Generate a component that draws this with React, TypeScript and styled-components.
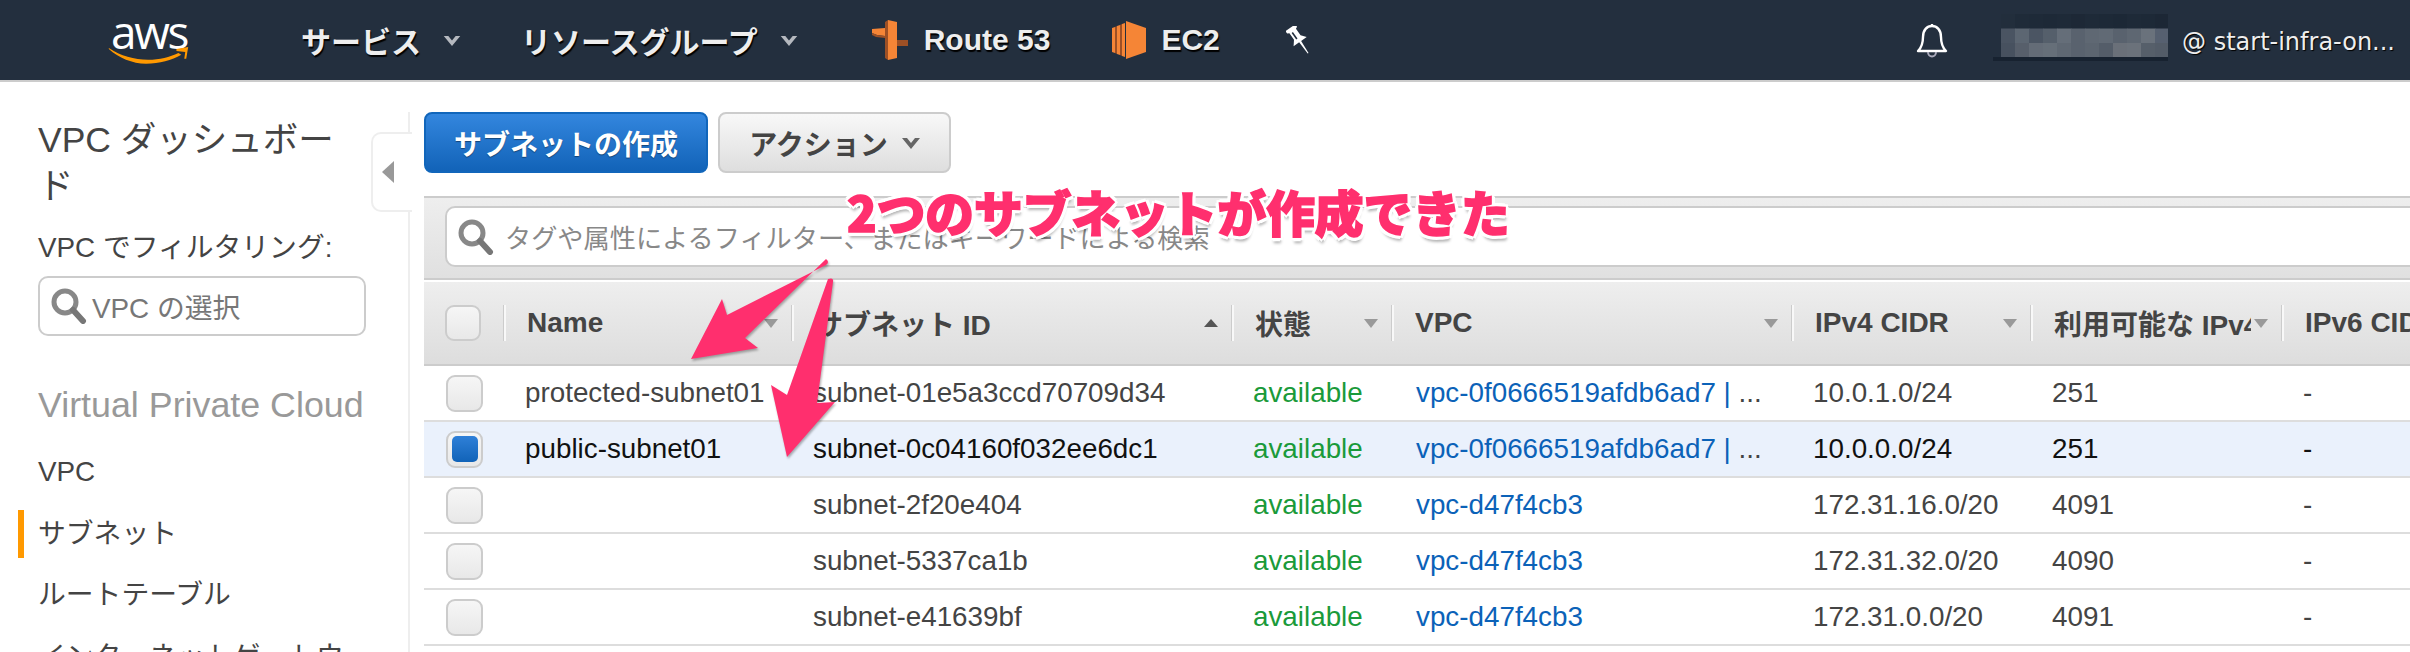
import React from 'react';
import styled, { createGlobalStyle } from 'styled-components';

const GlobalStyle = createGlobalStyle`
  html, body {
    margin: 0;
    padding: 0;
    background: #fff;
    overflow: hidden;
  }
`;

const sans = `"Liberation Sans", "Noto Sans CJK JP", sans-serif`;
const columns = '80px 288px 440px 160px 400px 239px 251px 1fr';

const Page = styled.div`
  position: relative;
  width: 2410px;
  height: 652px;
  overflow: hidden;
  font-family: ${sans};
  font-size: 27.8px;
  color: #444;
`;

const TopBar = styled.header`
  display: flex;
  align-items: center;
  height: 80px;
  padding-left: 108px;
  background: #232f3e;
  border-bottom: 2px solid #ccc;
  color: #eee;
  font-weight: bold;
  font-size: 30px;
  text-shadow: 1px 2px 1px #000;
`;

const Logo = styled.div`
  display: flex;
  flex-direction: column;
  align-items: center;
  width: 82px;
  height: 48px;
  margin-right: 111px;
  text-shadow: none;
`;

const LogoText = styled.span`
  font-family: "Open Sans", sans-serif;
  font-size: 46px;
  font-weight: 400;
  line-height: 30px;
  letter-spacing: -2.4px;
  color: #fff;
  height: 32px;
`;

const MenuItem = styled.div<{ $gap: number }>`
  display: flex;
  align-items: center;
  margin-right: ${({ $gap }) => $gap}px;
  white-space: nowrap;
`;

const MenuCaret = styled.svg`
  width: 18px;
  height: 11px;
  margin-left: 22px;
  fill: #b5b9bf;
`;

const ServiceIcon = styled.svg<{ $gap: number }>`
  margin-right: ${({ $gap }) => $gap}px;
`;

const PinIcon = styled.svg`
  flex: none;
`;

const TopRight = styled.div`
  display: flex;
  align-items: center;
  height: 80px;
  margin-left: auto;
  padding-right: 15px;
`;

const Bell = styled.svg`
  margin-right: 45px;
`;

const Mosaic = styled.svg`
  margin-right: 14px;
`;

const Account = styled.span`
  font-family: "DejaVu Sans", sans-serif;
  font-size: 24px;
  font-weight: normal;
  text-shadow: 1px 1px 1px #000;
  white-space: nowrap;
  padding-top: 4px;
`;

const Body = styled.div`
  display: flex;
  height: 570px;
`;

const Sidebar = styled.aside`
  position: relative;
  flex: 0 0 410px;
  box-sizing: border-box;
  margin-top: 30px;
  padding: 5px 42px 0 38px;
  border-right: 2px solid #eee;
`;

const SideTitle = styled.div`
  max-width: 310px;
  font-size: 35.5px;
  line-height: 46px;
`;

const FilterLabel = styled.div`
  margin-top: 21px;
  line-height: 36px;
  white-space: nowrap;
`;

const Select = styled.div`
  display: flex;
  align-items: center;
  gap: 5px;
  box-sizing: border-box;
  height: 60px;
  margin-top: 10px;
  padding-left: 11px;
  border: 2px solid #ccc;
  border-radius: 10px;
  color: #777;
`;

const SectionTitle = styled.div`
  margin-top: 47px;
  font-size: 35.8px;
  line-height: 44px;
  color: #999;
  white-space: nowrap;
`;

const NavList = styled.nav`
  display: flex;
  flex-direction: column;
  gap: 13.5px;
  margin-top: 21px;
`;

const NavItem = styled.div<{ $active?: boolean }>`
  min-height: 48px;
  line-height: 48px;
  margin-left: -20px;
  padding-left: 14px;
  border-left: 6px solid ${({ $active }) => ($active ? '#f90' : 'transparent')};
`;

const CollapseTab = styled.div`
  position: absolute;
  top: 20px;
  left: 371px;
  display: flex;
  align-items: center;
  justify-content: center;
  box-sizing: border-box;
  width: 41px;
  height: 80px;
  padding-right: 10px;
  background: #fff;
  border: 2px solid #eee;
  border-right: 0;
  border-radius: 10px 0 0 10px;
`;

const TabArrow = styled.div`
  width: 0;
  height: 0;
  border-top: 11px solid transparent;
  border-bottom: 11px solid transparent;
  border-right: 12px solid #999;
`;

const Main = styled.main`
  flex: 1;
  min-width: 0;
  padding-top: 30px;
  margin-left: -2px;
  padding-left: 16px;
  overflow: hidden;
`;

const Toolbar = styled.div`
  display: flex;
  gap: 10px;
`;

const PrimaryButton = styled.button`
  box-sizing: border-box;
  width: 284px;
  height: 61px;
  border: 2px solid #1166bb;
  border-radius: 8px;
  background: linear-gradient(#3386de, #1263b8);
  color: #fff;
  font: bold 28px ${sans};
  text-shadow: 0 1px 1px rgba(0, 0, 0, 0.4);
`;

const ActionButton = styled.button`
  display: flex;
  align-items: center;
  justify-content: center;
  gap: 14px;
  box-sizing: border-box;
  width: 233px;
  height: 61px;
  border: 2px solid #ccc;
  border-radius: 8px;
  background: linear-gradient(#f8f8f8, #dedede);
  color: #444;
  font: bold 28px ${sans};
`;

const ActionCaret = styled.svg`
  width: 18px;
  height: 12px;
  fill: #666;
`;

const FilterBand = styled.div`
  box-sizing: border-box;
  height: 84px;
  margin-top: 23px;
  padding: 8px 0 0 21px;
  background: linear-gradient(#eee, #e0e0e0);
  border-top: 2px solid #ccc;
  border-bottom: 2px solid #ccc;
`;

const FilterInput = styled.div`
  display: flex;
  align-items: center;
  gap: 11px;
  box-sizing: border-box;
  height: 61px;
  margin-right: -12px;
  padding-left: 11px;
  background: #fff;
  border: 2px solid #ccc;
  border-radius: 10px 0 0 10px;
  color: #888;
  font-size: 26.2px;
  white-space: nowrap;
`;

const HeaderRow = styled.div`
  display: grid;
  grid-template-columns: ${columns};
  align-items: center;
  box-sizing: border-box;
  height: 84px;
  margin-top: 2px;
  background: linear-gradient(#eee, #ddd);
  border-bottom: 2px solid #ccc;
`;

const HeadCheckCell = styled.div`
  padding-left: 21px;
`;

const HeadCell = styled.div`
  display: flex;
  align-items: center;
  gap: 3px;
  box-sizing: border-box;
  height: 36px;
  min-width: 0;
  padding: 0 14px 0 21px;
  border-left: 2px solid #f8f8f8;
  box-shadow: -1px 0 0 #ccc;

  &:last-child {
    padding-right: 0;
  }
`;

const HeadLabel = styled.span`
  flex: 1;
  min-width: 0;
  overflow: hidden;
  white-space: nowrap;
  font-weight: bold;
  font-size: 28px;
  color: #444;
`;

const SortCaret = styled.div<{ $up?: boolean }>`
  flex: none;
  width: 0;
  height: 0;
  border-left: 7.5px solid transparent;
  border-right: 7.5px solid transparent;
  ${({ $up }) => ($up ? 'border-bottom: 8px solid #555;' : 'border-top: 9px solid #999;')}
`;

const Row = styled.div<{ $selected?: boolean }>`
  display: grid;
  grid-template-columns: ${columns};
  align-items: center;
  box-sizing: border-box;
  height: 56px;
  background: ${({ $selected }) => ($selected ? '#eaf1fc' : '#fff')};
  border-bottom: 2px solid #ddd;
  color: ${({ $selected }) => ($selected ? '#111' : '#444')};
`;

const CheckCell = styled.div`
  padding-left: 22px;
`;

const Cell = styled.div`
  min-width: 0;
  padding-left: 21px;
  white-space: nowrap;
`;

const LinkCell = styled(Cell)`
  padding-left: 24px;
  color: #444;
`;

const Available = styled.span`
  color: #1a9a3a;
`;

const VpcLink = styled.span`
  color: #0b62b8;
`;

const Checkbox = styled.div<{ $size: number }>`
  display: flex;
  align-items: center;
  justify-content: center;
  box-sizing: border-box;
  width: ${({ $size }) => $size}px;
  height: ${({ $size }) => $size}px;
  border: 2px solid #ccc;
  border-radius: 9px;
  background: linear-gradient(#f6f6f6, #e8e8e8);
`;

const CheckMark = styled.div`
  width: 26px;
  height: 26px;
  border-radius: 5px;
  background: linear-gradient(#2f80d8, #1163b8);
`;

const Annotation = styled.div`
  position: absolute;
  top: 179px;
  left: 847px;
  font-family: "Noto Sans CJK JP", sans-serif;
  font-size: 48.7px;
  font-weight: 900;
  line-height: 64px;
  color: #ff2f6e;
  white-space: nowrap;
  -webkit-text-stroke: 1.6px #ff2f6e;
  text-shadow:
    4px 0 0 #fff, -4px 0 0 #fff, 0 4px 0 #fff, 0 -4px 0 #fff,
    3px 3px 0 #fff, -3px 3px 0 #fff, 3px -3px 0 #fff, -3px -3px 0 #fff,
    1px 6px 3px rgba(0, 0, 0, 0.3);
`;

const ArrowLayer = styled.svg`
  position: absolute;
  top: 0;
  left: 0;
  pointer-events: none;
  filter: drop-shadow(1px 2px 1px rgba(0, 0, 0, 0.3));
`;

const DownCaret = ({ icon: Icon }: { icon: typeof MenuCaret | typeof ActionCaret }) => (
  <Icon viewBox="0 0 18 12">
    <path d="M0 1l5 0 4 5 4-5 5 0-9 11z" />
  </Icon>
);

const Magnifier = () => (
  <svg width="36" height="36" viewBox="0 0 36 36">
    <circle cx="14" cy="14" r="11" fill="#fff" stroke="#888" strokeWidth="5" />
    <path d="M22 22l10 11" stroke="#777" strokeWidth="6" strokeLinecap="round" />
  </svg>
);

const Route53Icon = () => (
  <ServiceIcon $gap={16} width="36" height="40" viewBox="0 0 36 40">
    <path d="M0 9l13-1v8l-8-1-5-2z" fill="#f58536" />
    <path d="M0 13l5 2 8 1v2l-9-1-4-2z" fill="#9d5025" />
    <path d="M13 2l3-2v40l-3-2z" fill="#9d5025" />
    <path d="M16 0l9 2v36l-9 2z" fill="#f58536" />
    <path d="M25 20h11v6H25z" fill="#9d5025" />
  </ServiceIcon>
);

const Ec2Icon = () => (
  <ServiceIcon $gap={15} width="34" height="38" viewBox="0 0 34 38">
    <path d="M14 0l20 7v24l-20 7z" fill="#f58536" />
    <path d="M0 7l3-1v26l-3-1zM5 5l3-1v30l-3-1zM10 3l3-1v34l-3-1z" fill="#f58536" />
    <path d="M3 6l2-1v28l-2-1zM8 4l2-1v32l-2-1z" fill="#9d5025" />
  </ServiceIcon>
);

const Pin = () => (
  <PinIcon width="26" height="28" viewBox="0 0 26 28">
    <g transform="rotate(-35 13 14)">
      <path d="M7 -1h12v3l-2 1v8l4 5H14.2L13.4 30h-1L11.8 16H5l4-5V3L7 2z" fill="#fff" />
      <path d="M11 4h1.6v8H11z" fill="#232f3e" />
    </g>
  </PinIcon>
);

const BellIcon = () => (
  <Bell width="32" height="36" viewBox="0 0 32 36" fill="none" stroke="#fff" strokeWidth="2.4">
    <path d="M16 2v2M2 29c4-4 5-8 5-14 0-7 4-11 9-11s9 4 9 11c0 6 1 10 5 14z" strokeLinejoin="round" />
    <path d="M12 30c0 6 8 6 8 0" stroke="#aab" strokeWidth="2" />
  </Bell>
);

const mosaicShades = [
  ['#222e3c', '#1f2b39', '#1e2a38', '#1d2937', '#1e2a38', '#1d2836', '#1e2a38', '#1d2937', '#1c2836', '#1e2a38', '#1d2937', '#1c2735'],
  ['#4a5462', '#5c6672', '#4b5563', '#555f6b', '#656e79', '#59626e', '#5f6873', '#616a75', '#59626e', '#5e6772', '#6a727c', '#566070'],
  ['#47515f', '#575f6b', '#646c77', '#666f79', '#5f6873', '#59626e', '#5c6570', '#545d69', '#6a7079', '#6b727b', '#565f6a', '#535c68'],
];

const BlurredName = () => (
  <Mosaic width="175" height="80" viewBox="0 0 175 80">
    {mosaicShades.map((shades, row) =>
      shades.map((fill, col) => (
        <rect key={`${row}-${col}`} x={8 + col * 14} y={14 + row * 14.5} width="14.5" height="15" fill={fill} />
      )),
    )}
    <rect x="0" y="57" width="175" height="4" fill="#172230" />
  </Mosaic>
);

const SmileLogo = () => (
  <svg width="82" height="17" viewBox="0 0 82 17">
    <path d="M0 1c12 8 26 12 40 12 12 0 22-3 31-7l3 2C64 14 52 17 38 17 24 17 10 11 0 2z" fill="#f90" />
    <path d="M69 2l12-2-2 12-2 0 1-7-9-1z" fill="#f90" />
  </svg>
);

type SubnetRow = {
  name: string;
  id: string;
  vpc: string;
  truncated?: boolean;
  cidr: string;
  free: string;
  selected?: boolean;
};

const subnets: SubnetRow[] = [
  { name: 'protected-subnet01', id: 'subnet-01e5a3ccd70709d34', vpc: 'vpc-0f0666519afdb6ad7 | ', truncated: true, cidr: '10.0.1.0/24', free: '251' },
  { name: 'public-subnet01', id: 'subnet-0c04160f032ee6dc1', vpc: 'vpc-0f0666519afdb6ad7 | ', truncated: true, cidr: '10.0.0.0/24', free: '251', selected: true },
  { name: '', id: 'subnet-2f20e404', vpc: 'vpc-d47f4cb3', cidr: '172.31.16.0/20', free: '4091' },
  { name: '', id: 'subnet-5337ca1b', vpc: 'vpc-d47f4cb3', cidr: '172.31.32.0/20', free: '4090' },
  { name: '', id: 'subnet-e41639bf', vpc: 'vpc-d47f4cb3', cidr: '172.31.0.0/20', free: '4091' },
];

const headers = [
  { label: 'Name' },
  { label: 'サブネット ID', up: true },
  { label: '状態' },
  { label: 'VPC' },
  { label: 'IPv4 CIDR' },
  { label: '利用可能な IPv4 CIDR' },
  { label: 'IPv6 CIDR' },
];

const App: React.FC = () => (
  <Page>
    <GlobalStyle />
    <TopBar>
      <Logo>
        <LogoText>aws</LogoText>
        <SmileLogo />
      </Logo>
      <MenuItem $gap={60}>
        サービス
        <DownCaret icon={MenuCaret} />
      </MenuItem>
      <MenuItem $gap={74}>
        リソースグループ
        <DownCaret icon={MenuCaret} />
      </MenuItem>
      <MenuItem $gap={62}>
        <Route53Icon />
        Route 53
      </MenuItem>
      <MenuItem $gap={66}>
        <Ec2Icon />
        EC2
      </MenuItem>
      <Pin />
      <TopRight>
        <BellIcon />
        <BlurredName />
        <Account>@ start-infra-on...</Account>
      </TopRight>
    </TopBar>
    <Body>
      <Sidebar>
        <SideTitle>VPC ダッシュボード</SideTitle>
        <FilterLabel>VPC でフィルタリング:</FilterLabel>
        <Select>
          <Magnifier />
          VPC の選択
        </Select>
        <SectionTitle>Virtual Private Cloud</SectionTitle>
        <NavList>
          <NavItem>VPC</NavItem>
          <NavItem $active>サブネット</NavItem>
          <NavItem>ルートテーブル</NavItem>
          <NavItem>インターネットゲートウェイ</NavItem>
        </NavList>
        <CollapseTab>
          <TabArrow />
        </CollapseTab>
      </Sidebar>
      <Main>
        <Toolbar>
          <PrimaryButton>サブネットの作成</PrimaryButton>
          <ActionButton>
            アクション
            <DownCaret icon={ActionCaret} />
          </ActionButton>
        </Toolbar>
        <FilterBand>
          <FilterInput>
            <Magnifier />
            タグや属性によるフィルター、またはキーワードによる検索
          </FilterInput>
        </FilterBand>
        <HeaderRow>
          <HeadCheckCell>
            <Checkbox $size={36} />
          </HeadCheckCell>
          {headers.map(({ label, up }) => (
            <HeadCell key={label}>
              <HeadLabel>{label}</HeadLabel>
              {label !== 'IPv6 CIDR' && <SortCaret $up={up} />}
            </HeadCell>
          ))}
        </HeaderRow>
        {subnets.map((subnet) => (
          <Row key={subnet.id} $selected={subnet.selected}>
            <CheckCell>
              <Checkbox $size={37}>{subnet.selected && <CheckMark />}</Checkbox>
            </CheckCell>
            <Cell>{subnet.name}</Cell>
            <Cell>{subnet.id}</Cell>
            <Cell>
              <Available>available</Available>
            </Cell>
            <LinkCell>
              <VpcLink>{subnet.vpc}</VpcLink>
              {subnet.truncated && '...'}
            </LinkCell>
            <Cell>{subnet.cidr}</Cell>
            <Cell>{subnet.free}</Cell>
            <Cell>-</Cell>
          </Row>
        ))}
      </Main>
    </Body>
    <Annotation>2つのサブネットが作成できた</Annotation>
    <ArrowLayer width="2410" height="652" viewBox="0 0 2410 652">
      <path d="M826 259Q830 262 826 265L727 315 722 299 691 359 758 348 745 338Z" fill="#ff2f6e" />
      <path d="M828 279Q834 277 833 282L817 403 835 402 787 457 771 385 787 395Z" fill="#ff2f6e" />
    </ArrowLayer>
  </Page>
);

export default App;
